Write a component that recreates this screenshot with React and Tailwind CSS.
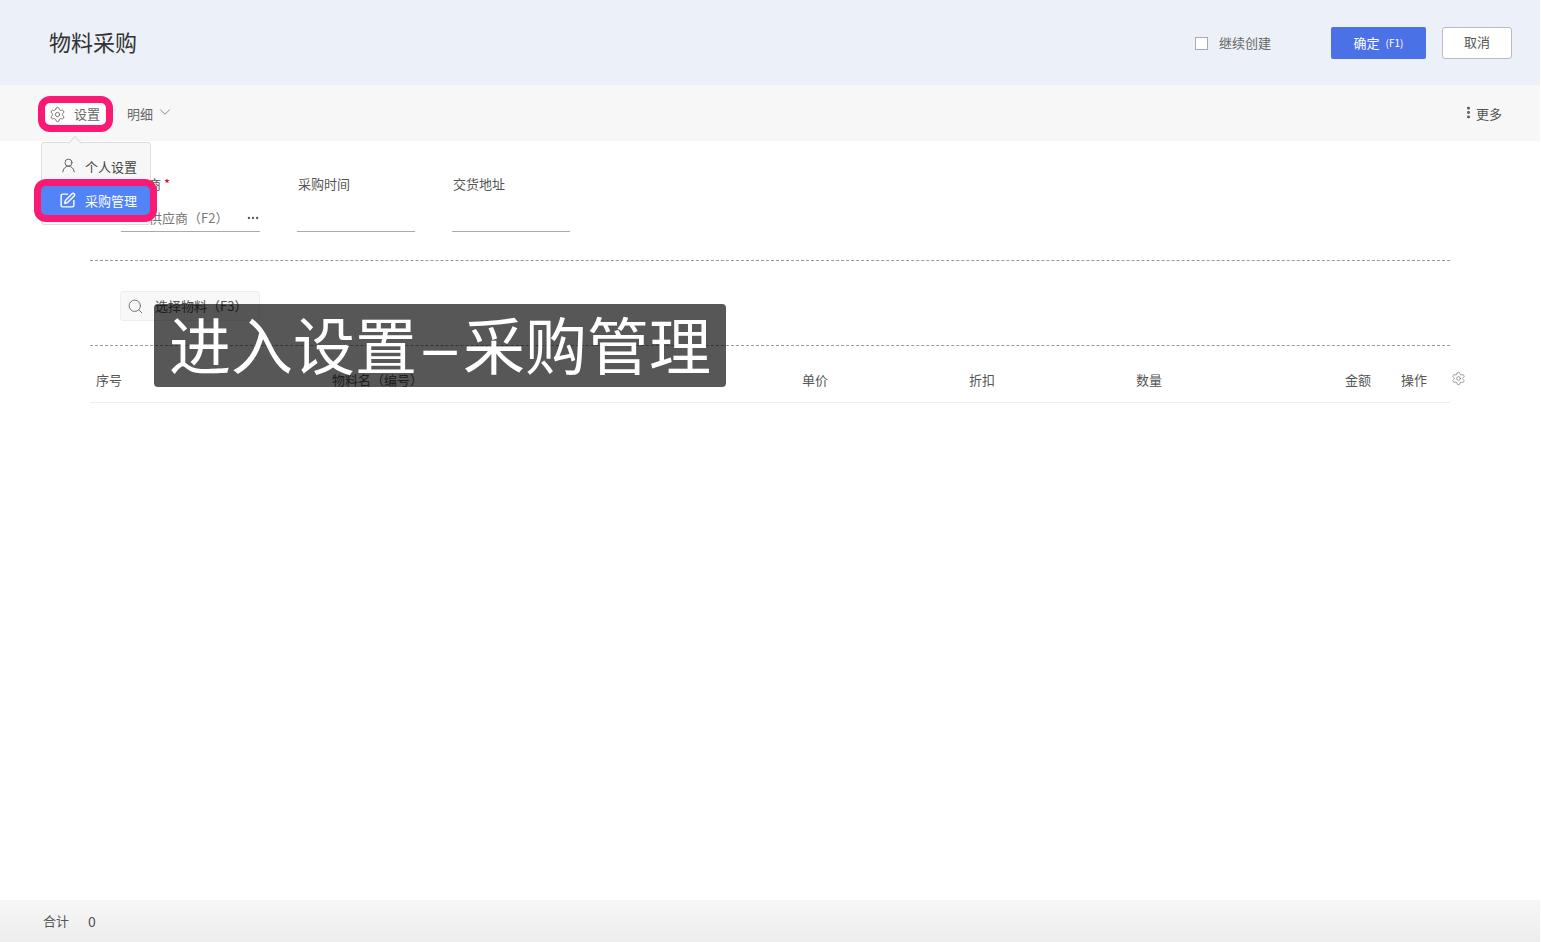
import { Settings, ChevronDown, Search, UserRound, SquarePen, Ellipsis, EllipsisVertical } from 'lucide-react';

const font = { fontFamily: '"Noto Sans CJK SC", sans-serif' };

const columns = [
    { label: '序号', width: 'w-[236px]' },
    { label: '物料名（编号）', width: 'w-[470px]' },
    { label: '单价', width: 'w-[167px]' },
    { label: '折扣', width: 'w-[167px]' },
    { label: '数量', width: 'w-[209px]' },
    { label: '金额', width: 'w-[56px]' },
    { label: '操作', width: 'w-[50px]' },
];

const Field = ({ label, required, width, children }) => (
    <div className={`flex flex-col ${width}`}>
        <div className="h-[18px] pl-px text-[13px] leading-[18px] text-[#555]">
            {label}
            {required && <span className="ml-[3px] text-[#d0021b]">*</span>}
        </div>
        <div className="mt-[10px] flex h-[29px] items-center justify-between border-b border-[#aaa] pt-0.5 text-[13px] text-[#777]">
            {children}
        </div>
    </div>
);

const App = () => {
    return (
        <div className="relative flex h-[942px] w-[1540px] flex-col overflow-hidden bg-white" style={font}>
            {/* Header */}
            <header className="flex h-[85px] shrink-0 items-center bg-[#ecf0f8] pl-[49px] pr-[28px]">
                <h1 className="-mt-0.5 text-[22px] font-normal text-[#333]">物料采购</h1>
                <label className="ml-auto flex items-center gap-[11px] text-[13px] text-[#666]">
                    <span className="mt-px h-[13px] w-[13px] border border-[#aaa] bg-white" />
                    继续创建
                </label>
                <button className="ml-[60px] flex h-8 w-[95px] items-center justify-center gap-1.5 rounded-[2px] bg-[#4a72e6] text-[13px] text-white">
                    确定 <span className="text-[10px]">(F1)</span>
                </button>
                <button className="ml-4 h-8 w-[70px] rounded-[3px] border border-[#bbb] bg-white pb-0.5 text-[13px] text-[#555]">
                    取消
                </button>
            </header>

            {/* Toolbar */}
            <div className="flex h-[56px] shrink-0 items-center bg-[#f7f7f7] pl-[50px] pr-[38px] pt-0.5 text-[13px] text-[#666]">
                <Settings size={16} strokeWidth={1.25} className="text-[#666]" />
                <span className="ml-[8px]">设置</span>
                <span className="ml-[27px]">明细</span>
                <ChevronDown size={18} strokeWidth={1} className="ml-[3px] -mt-1 text-[#666]" />
                <EllipsisVertical size={15} strokeWidth={2.75} className="ml-auto -mt-1 text-[#555]" />
                <span className="text-[#555]">更多</span>
            </div>

            {/* Form */}
            <div className="flex shrink-0 gap-[37px] pl-[121px] pt-[34px]">
                <Field label="供应商" required width="w-[139px]">
                    <span className="pl-0.5">选择供应商（F2）</span>
                    <Ellipsis size={14} className="text-[#555]" />
                </Field>
                <Field label="采购时间" width="w-[118px]" />
                <Field label="交货地址" width="w-[118px]" />
            </div>

            <div className="ml-[90px] mt-7 w-[1360px] shrink-0 border-t border-dashed border-[#999]" />

            {/* Material search */}
            <div className="ml-[120px] mt-[30px] flex h-[30px] w-[140px] shrink-0 items-center rounded-[3px] border border-[#eee] bg-[#f8f8f8] pl-[6px] text-[13px] text-[#555]">
                <Search size={17} strokeWidth={1.25} className="text-[#666]" />
                <span className="ml-[11px]">选择物料（F3）</span>
            </div>

            <div className="ml-[90px] mt-6 w-[1360px] shrink-0 border-t border-dashed border-[#999]" />

            {/* Table header */}
            <div className="ml-[90px] flex h-[57px] w-[1360px] shrink-0 items-center border-b border-[#eee] pl-1.5 pt-[12px] text-[13px] text-[#555]">
                {columns.map((col) => (
                    <div key={col.label} className={`shrink-0 ${col.width}`}>{col.label}</div>
                ))}
                <Settings size={15} strokeWidth={1} className="-mt-1 shrink-0 text-[#666]" />
            </div>

            <div className="flex-1" />

            {/* Footer */}
            <footer className="flex h-[42px] shrink-0 items-center gap-[19px] bg-gradient-to-b from-[#f7f7f7] to-[#ededed] pl-[43px] text-[13px] text-[#555]">
                <span>合计</span>
                <span className="text-[14px]">0</span>
            </footer>

            {/* Dropdown menu */}
            <div className="absolute left-[41px] top-[142px] h-[83px] w-[110px] rounded-[3px] border border-[#ddd] bg-[#f7f7f7] text-[13px]">
                <div className="absolute -top-[5px] left-[28px] h-2.5 w-2.5 rotate-45 border-l border-t border-[#ddd] bg-[#f7f7f7]" />
                <div className="flex h-[47px] items-center pl-[18px] text-[#444]">
                    <UserRound size={17} strokeWidth={1.25} className="-mt-0.5 text-[#555]" />
                    <span className="ml-[8px]">个人设置</span>
                </div>
            </div>

            {/* Highlight: settings */}
            <div className="absolute left-[38px] top-[96px] h-[36px] w-[75px] rounded-[12px] border-[7px] border-[#fa1a74] bg-[#f7f7f7]" />
            <div className="absolute left-[46px] top-[104px] flex h-5 w-[59px] items-center rounded-[5px] bg-white pl-[3px] text-[13px] text-[#666]">
                <Settings size={17} strokeWidth={1.25} />
                <span className="ml-[8px]">设置</span>
            </div>

            {/* Highlight: purchase management */}
            <div className="absolute left-[34px] top-[179px] flex h-[43px] w-[123px] items-center rounded-[12px] border-[7px] border-[#fa1a74] bg-[#5283f7] pl-[18px] text-[13px] text-white">
                <SquarePen size={17} strokeWidth={2} />
                <span className="ml-[9px]">采购管理</span>
            </div>

            {/* Caption */}
            <div className="absolute left-[154px] top-[304px] flex h-[83px] w-[572px] items-center justify-center rounded-[4px] bg-black/[.66] pb-1 text-[62px] font-normal text-white">
                进入设置<span className="w-[46px] scale-x-[2.1] text-center">-</span>采购管理
            </div>
        </div>
    );
};

export default App;
